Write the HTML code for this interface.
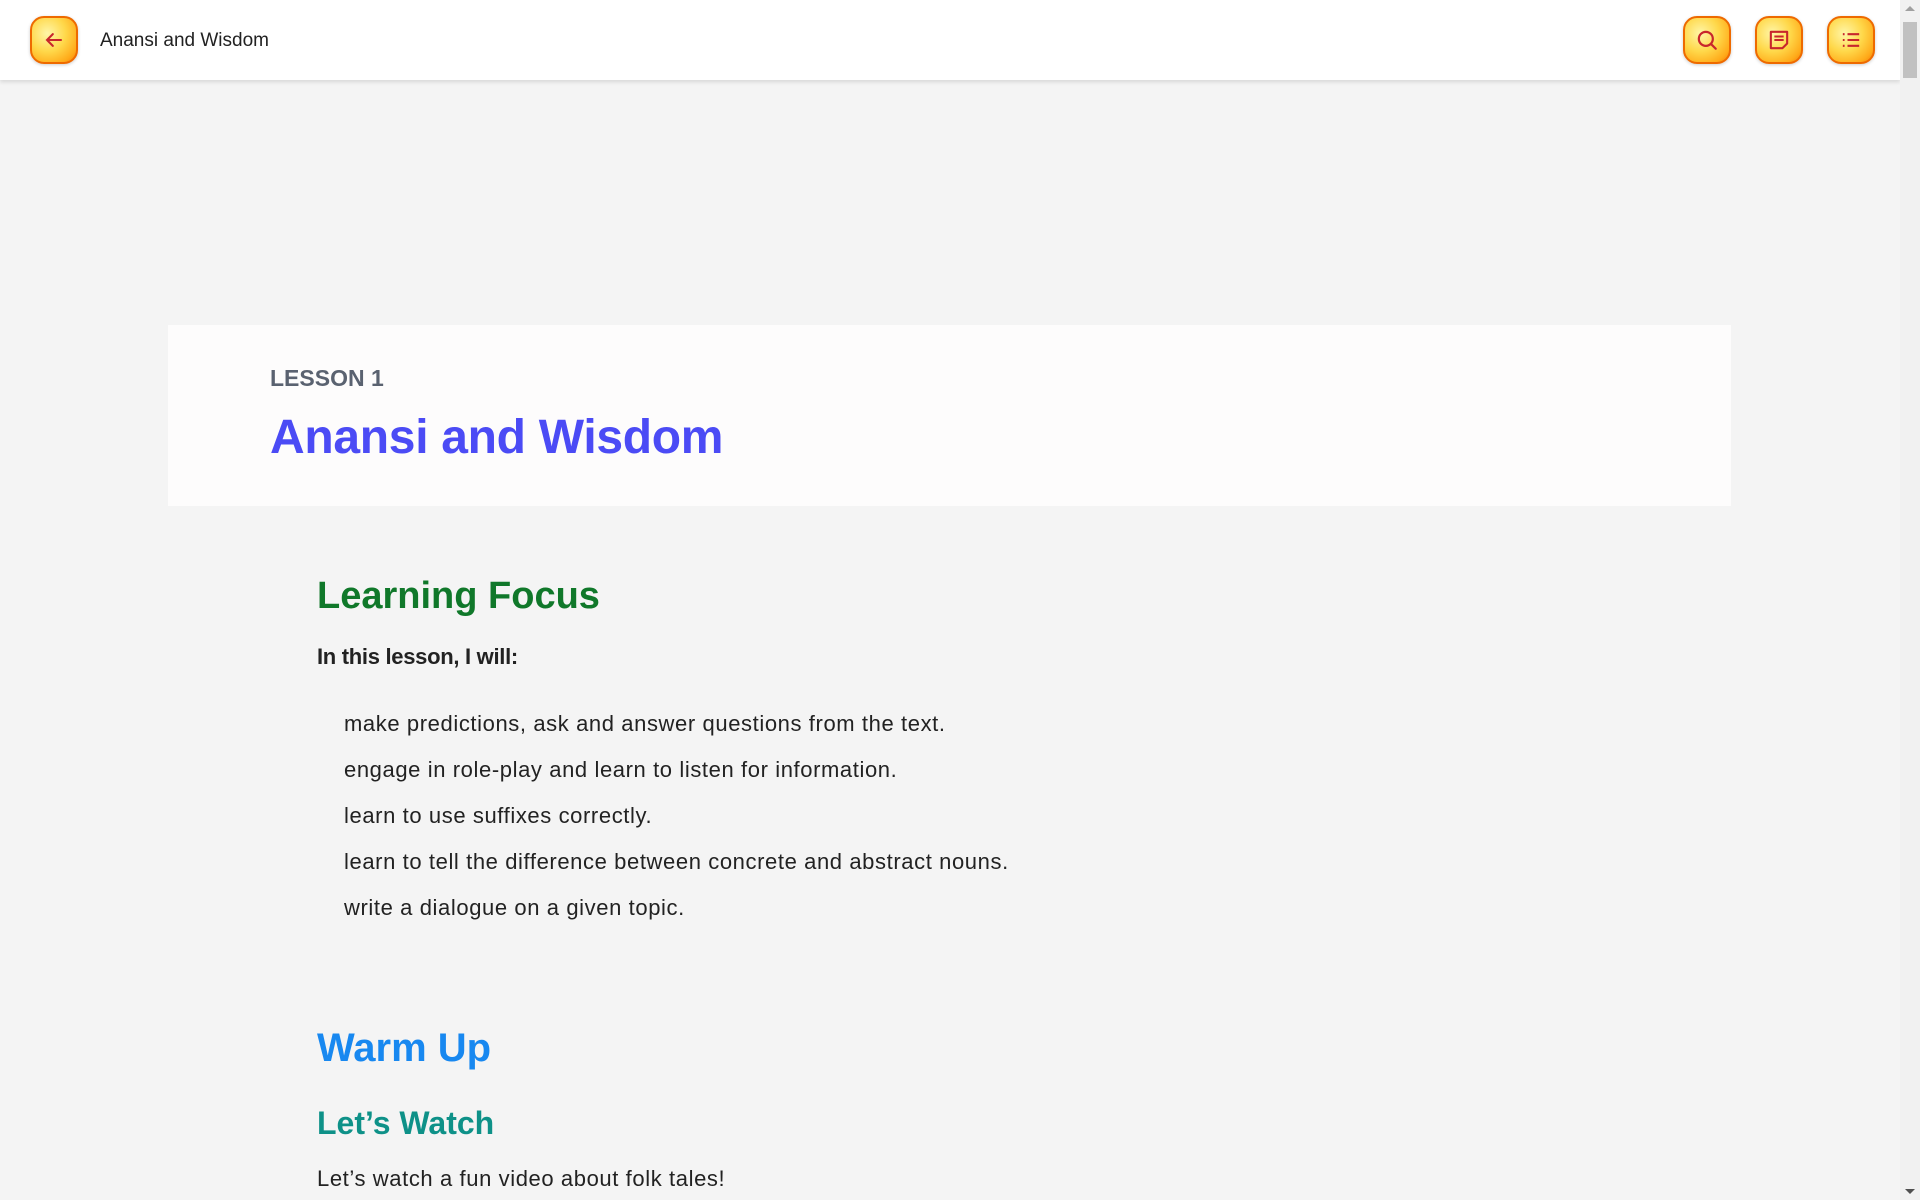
<!DOCTYPE html>
<html><head><meta charset="utf-8"><style>
*{margin:0;padding:0;box-sizing:border-box}
body{width:1920px;height:1200px;background:#f4f4f4;font-family:"Liberation Sans",sans-serif;position:relative;overflow:hidden;color:#222}
.hdr{position:absolute;left:0;top:0;width:1900px;height:80px;background:#fff;box-shadow:0 2px 4px rgba(0,0,0,.12)}
.btn{position:absolute;top:16px;width:48px;height:48px;border-radius:14px;background:radial-gradient(circle at 35% 35%,#fff6a8 0%,#ffd84a 45%,#ffab1a 80%,#f47a06 100%);border:2px solid #ee6a00;box-shadow:0 1px 3px rgba(0,0,0,.2)}
.btn svg{position:absolute;left:8px;top:8px}
.t{position:absolute;white-space:nowrap;line-height:1}
.li{letter-spacing:0.6px;font-size:22px}
.sb{position:absolute;right:0;top:0;width:20px;height:1200px;background:#f1f1f1}
</style></head><body>
<div class="hdr">
<div class="btn" style="left:30px"><svg width="28" height="28" viewBox="0 0 24 24" fill="none" stroke="#c8262c" stroke-width="1.8" stroke-linecap="round"><path d="M18 12H6M11 7l-5 5 5 5"/></svg></div>
<div class="t" style="left:100px;top:31px;font-size:19px;color:#222">Anansi and Wisdom</div>
<div class="btn" style="left:1683px"><svg width="28" height="28" viewBox="0 0 24 24" fill="none" stroke="#c8262c" stroke-width="1.9" stroke-linecap="round"><circle cx="11" cy="11" r="6"/><path d="M15.5 15.5l4 4"/></svg></div>
<div class="btn" style="left:1755px"><svg width="28" height="28" viewBox="0 0 24 24" fill="none" stroke="#c8262c" stroke-width="1.8" stroke-linejoin="round"><path d="M5 5h14v10l-4 4H5z"/><path d="M8 9h8M8 12h8"/></svg></div>
<div class="btn" style="left:1827px"><svg width="28" height="28" viewBox="0 0 24 24" fill="none" stroke="#c8262c" stroke-width="1.8"><path d="M5 7h1.5M5 12h1.5M5 17h1.5M9 7h10M9 12h10M9 17h10"/></svg></div>
</div>
<div class="sb"><div style="position:absolute;left:3px;top:22px;width:14px;height:56px;background:#c1c1c1"></div>
<div style="position:absolute;left:5px;top:6px;border:5px solid transparent;border-bottom-color:#a0a0a0;border-top:0"></div>
<div style="position:absolute;left:5px;bottom:6px;border:5px solid transparent;border-top-color:#505050;border-bottom:0"></div></div>
<div style="position:absolute;left:168px;top:325px;width:1563px;height:181px;background:#fdfcfc"></div>
<div class="t" style="left:270px;top:367px;font-size:23px;font-weight:bold;color:#5a6270">LESSON 1</div>
<div class="t" style="left:270px;top:414px;font-size:48px;font-weight:bold;color:#4b4bf5;letter-spacing:-0.3px">Anansi and Wisdom</div>
<div class="t" style="left:317px;top:577px;font-size:38px;font-weight:bold;color:#10782a">Learning Focus</div>
<div class="t" style="left:317px;top:646px;font-size:22px;font-weight:bold;color:#222;letter-spacing:-0.3px">In this lesson, I will:</div>
<div class="t li" style="left:344px;top:713px">make predictions, ask and answer questions from the text.</div>
<div class="t li" style="left:344px;top:759px">engage in role-play and learn to listen for information.</div>
<div class="t li" style="left:344px;top:805px">learn to use suffixes correctly.</div>
<div class="t li" style="left:344px;top:851px">learn to tell the difference between concrete and abstract nouns.</div>
<div class="t li" style="left:344px;top:897px">write a dialogue on a given topic.</div>
<div class="t" style="left:317px;top:1028px;font-size:40px;font-weight:bold;color:#1888f0">Warm Up</div>
<div class="t" style="left:317px;top:1107px;font-size:32px;font-weight:bold;color:#0e9188">Let’s Watch</div>
<div class="t li" style="left:317px;top:1168px">Let’s watch a fun video about folk tales!</div>
</body></html>
